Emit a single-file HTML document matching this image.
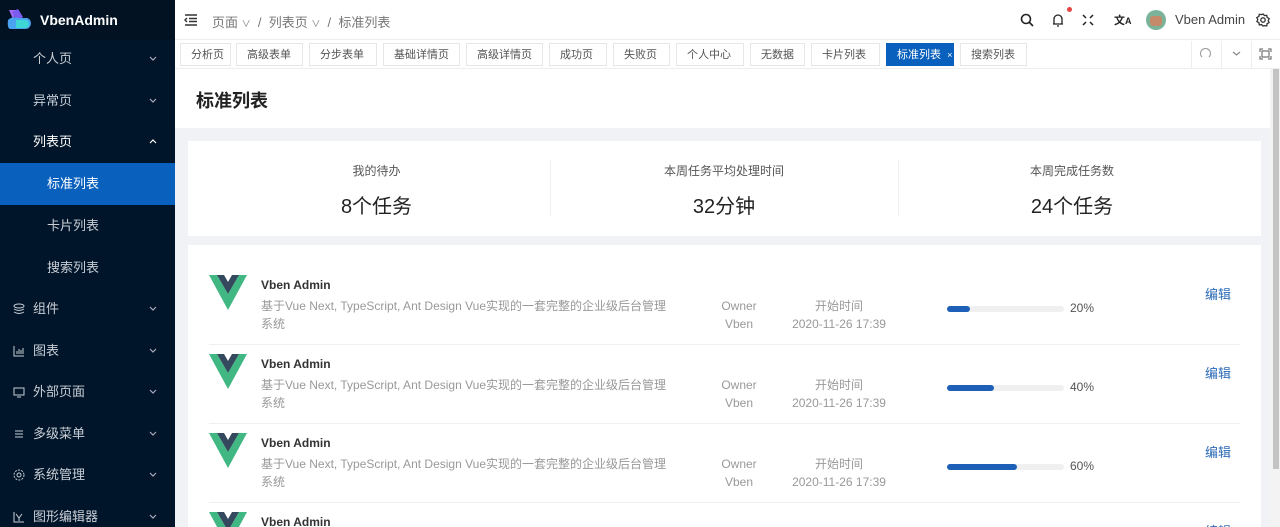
<!DOCTYPE html>
<html><head><meta charset="utf-8"><style>
*{box-sizing:border-box;margin:0;padding:0}
html{width:1280px;height:527px;overflow:hidden}
body{width:1280px;height:527px;overflow:hidden;font-family:"Liberation Sans","Noto Sans CJK SC",sans-serif;background:#f0f2f5;position:relative;font-size:13px;color:#333}
.a{position:absolute}
#side{left:0;top:0;width:175px;height:527px;background:#001529;overflow:hidden}
#logo{left:0;top:0;width:175px;height:40px;background:#021222}
.mi{position:absolute;left:0;width:175px;height:42px;line-height:42px;color:#c9ced6;font-size:13px}
.mi .t{position:absolute;left:33px}
.mi .c{position:absolute;right:18px;top:18px}
.mi svg.i{position:absolute;left:13px;top:15px}
.sel{background:#0960bd;color:#fff}
.tab{position:absolute;top:43px;height:23px;line-height:22px;border:1px solid #e6e6e6;background:#fff;font-size:11px;color:#555;padding-left:10px}
.row{position:absolute;left:209px;width:1031px;height:79px;border-bottom:1px solid #f0f0f0}
.vlogo{position:absolute;left:0;top:9px}
.tt{position:absolute;left:52px;top:12px;font-size:12px;font-weight:bold;color:#333}
.ds{position:absolute;left:52px;top:31px;width:412px;font-size:12px;color:#999;line-height:18px}
.ow{position:absolute;left:500px;top:31px;width:60px;text-align:center;font-size:12px;color:#999;line-height:18px}
.st{position:absolute;left:570px;top:31px;width:120px;text-align:center;font-size:12px;color:#999;line-height:18px}
.pb{position:absolute;left:738px;top:40px;width:117px;height:6px;border-radius:3px;background:#f0f0f0}
.pb i{display:block;height:6px;border-radius:3px;background:#1e5fb8}
.pc{position:absolute;left:861px;top:35px;font-size:12px;color:#555}
.ed{position:absolute;left:996px;top:18px;font-size:13px;color:#2c6ab5}
</style></head><body>
<div id="side" class="a">
<div id="logo" class="a">
<svg class="a" style="left:6px;top:8px" width="26" height="24" viewBox="0 0 26 24"><path d="M3 2h8l-4 9z" fill="#a56bf5"/><path d="M6 4l6-3 5 8-6 5z" fill="#7b5cf0"/><path d="M2 12q4-4 10-2h9q4 1 4 6-1 5-6 5H4q-3-1-2-9z" fill="#4aa3f0"/><path d="M10 12h10q3 1 3 5-1 3-4 3H10z" fill="#3fd6d6"/></svg>
<div class="a" style="left:40px;top:12px;color:#fff;font-weight:bold;font-size:14px">VbenAdmin</div>
</div>
<div class="mi" style="top:38px"><span class="t">个人页</span><svg class="c" width="8" height="5" viewBox="0 0 8 5" fill="none" stroke="#aab" stroke-width="1.2"><path d="M1 1l3 3 3-3"/></svg></div>
<div class="mi" style="top:80px"><span class="t">异常页</span><svg class="c" width="8" height="5" viewBox="0 0 8 5" fill="none" stroke="#aab" stroke-width="1.2"><path d="M1 1l3 3 3-3"/></svg></div>
<div class="mi" style="top:121px;color:#fff"><span class="t">列表页</span><svg class="c" width="8" height="5" viewBox="0 0 8 5" fill="none" stroke="#fff" stroke-width="1.2"><path d="M1 4l3-3 3 3"/></svg></div>
<div class="mi sel" style="top:163px"><span class="t" style="left:47px">标准列表</span></div>
<div class="mi" style="top:205px"><span class="t" style="left:47px">卡片列表</span></div>
<div class="mi" style="top:247px"><span class="t" style="left:47px">搜索列表</span></div>
<div class="mi" style="top:288px"><svg class="i" width="12" height="12" viewBox="0 0 12 12" fill="none" stroke="#c9ced6"><ellipse cx="6" cy="3" rx="5" ry="2"/><path d="M1 6q5 3 10 0M1 9q5 3 10 0"/></svg><span class="t">组件</span><svg class="c" width="8" height="5" viewBox="0 0 8 5" fill="none" stroke="#aab" stroke-width="1.2"><path d="M1 1l3 3 3-3"/></svg></div>
<div class="mi" style="top:330px"><svg class="i" width="12" height="12" viewBox="0 0 12 12" fill="none" stroke="#c9ced6"><path d="M1 1v10h10M4 9V6M6 9V4M8 9V5M10 9V3"/></svg><span class="t">图表</span><svg class="c" width="8" height="5" viewBox="0 0 8 5" fill="none" stroke="#aab" stroke-width="1.2"><path d="M1 1l3 3 3-3"/></svg></div>
<div class="mi" style="top:371px"><svg class="i" width="12" height="12" viewBox="0 0 12 12" fill="none" stroke="#c9ced6"><rect x="1" y="2" width="10" height="7"/><path d="M4 11h4"/></svg><span class="t">外部页面</span><svg class="c" width="8" height="5" viewBox="0 0 8 5" fill="none" stroke="#aab" stroke-width="1.2"><path d="M1 1l3 3 3-3"/></svg></div>
<div class="mi" style="top:413px"><svg class="i" width="12" height="12" viewBox="0 0 12 12" fill="none" stroke="#c9ced6"><path d="M2 3h8M2 6h8M2 9h8"/></svg><span class="t">多级菜单</span><svg class="c" width="8" height="5" viewBox="0 0 8 5" fill="none" stroke="#aab" stroke-width="1.2"><path d="M1 1l3 3 3-3"/></svg></div>
<div class="mi" style="top:454px"><svg class="i" width="12" height="12" viewBox="0 0 12 12" fill="none" stroke="#c9ced6"><circle cx="6" cy="6" r="2"/><circle cx="6" cy="6" r="5" stroke-dasharray="2 1.2"/></svg><span class="t">系统管理</span><svg class="c" width="8" height="5" viewBox="0 0 8 5" fill="none" stroke="#aab" stroke-width="1.2"><path d="M1 1l3 3 3-3"/></svg></div>
<div class="mi" style="top:496px"><svg class="i" width="12" height="12" viewBox="0 0 12 12" fill="none" stroke="#c9ced6"><path d="M1 1v10h10M3 3l3 4 3-4M6 7v3"/></svg><span class="t">图形编辑器</span><svg class="c" width="8" height="5" viewBox="0 0 8 5" fill="none" stroke="#aab" stroke-width="1.2"><path d="M1 1l3 3 3-3"/></svg></div>
</div>
<div class="a" style="left:175px;top:0;width:1105px;height:40px;background:#fff;border-bottom:1px solid #eee"></div>
<svg class="a" style="left:184px;top:14px" width="13" height="12" viewBox="0 0 13 12" fill="none" stroke="#333" stroke-width="1.4"><path d="M1 1h12M5 4.5h8M5 7.5h8M1 11h12M3 4l-2 2 2 2"/></svg>
<div class="a" style="left:212px;top:12px;font-size:13px;color:#777">页面 <span style="font-size:9px">∨</span> &nbsp;/ &nbsp;列表页 <span style="font-size:9px">∨</span> &nbsp;/ &nbsp;标准列表</div>
<svg class="a" style="left:1020px;top:13px" width="14" height="14" viewBox="0 0 14 14" fill="none" stroke="#222" stroke-width="1.6"><circle cx="6" cy="6" r="4.5"/><path d="M9.5 9.5l3.5 3.5"/></svg>
<svg class="a" style="left:1052px;top:13px" width="12" height="15" viewBox="0 0 12 15" fill="none" stroke="#222" stroke-width="1.3"><path d="M2 11V6a4 4 0 018 0v5zM1 11h10M5 13h2"/></svg>
<div class="a" style="left:1067px;top:7px;width:5px;height:5px;border-radius:50%;background:#e54545"></div>
<svg class="a" style="left:1082px;top:14px" width="12" height="12" viewBox="0 0 12 12" fill="none" stroke="#222" stroke-width="1.5"><path d="M1 1l3 3M11 1l-3 3M1 11l3-3M11 11l-3-3"/></svg>
<div class="a" style="left:1114px;top:12px;font-size:11px;font-weight:bold;color:#222">文<span style="font-size:9px">A</span></div>
<div class="a" style="left:1146px;top:10px;width:20px;height:20px;border-radius:50%;background:#7ab39a;overflow:hidden"><div style="margin:6px 0 0 4px;width:12px;height:10px;background:#c48a6a;border-radius:3px"></div></div>
<div class="a" style="left:1175px;top:12px;font-size:13px;color:#444">Vben Admin</div>
<svg class="a" style="left:1256px;top:13px" width="14" height="14" viewBox="0 0 14 14" fill="none" stroke="#333" stroke-width="1.3"><circle cx="7" cy="7" r="2.2"/><path d="M7 1l1.5 1.6 2.2-.3.5 2.1 2 1.2-1 2 .9 2-2 1.1-.4 2.2-2.2-.3L7 13l-1.5-1.4-2.2.3-.4-2.2-2-1.1.9-2-1-2 2-1.2.5-2.1 2.2.3z"/></svg>
<div class="a" style="left:175px;top:40px;width:1105px;height:29px;background:#fff;border-bottom:1px solid #eee"></div>
<div class="tab" style="left:180px;width:51px">分析页</div>
<div class="tab" style="left:236px;width:67px">高级表单</div>
<div class="tab" style="left:309px;width:68px">分步表单</div>
<div class="tab" style="left:383px;width:77px">基础详情页</div>
<div class="tab" style="left:466px;width:77px">高级详情页</div>
<div class="tab" style="left:549px;width:58px">成功页</div>
<div class="tab" style="left:613px;width:57px">失败页</div>
<div class="tab" style="left:676px;width:68px">个人中心</div>
<div class="tab" style="left:750px;width:55px">无数据</div>
<div class="tab" style="left:811px;width:69px">卡片列表</div>
<div class="tab" style="left:886px;width:68px;background:#0960bd;border-color:#0960bd;color:#fff">标准列表 <span style="font-size:9px;margin-left:3px">×</span></div>
<div class="tab" style="left:960px;width:67px">搜索列表</div>
<div class="a" style="left:1191px;top:41px;width:1px;height:27px;background:#eee"></div>
<div class="a" style="left:1221px;top:41px;width:1px;height:27px;background:#eee"></div>
<div class="a" style="left:1251px;top:41px;width:1px;height:27px;background:#eee"></div>
<div class="a" style="left:1200px;top:48px;width:11px;height:11px;border:1.3px solid #999;border-radius:50%;border-bottom-color:transparent"></div>
<svg class="a" style="left:1232px;top:51px" width="9" height="5" viewBox="0 0 9 5" fill="none" stroke="#888" stroke-width="1.2"><path d="M1 1l3.5 3 3.5-3"/></svg>
<svg class="a" style="left:1259px;top:48px" width="13" height="12" viewBox="0 0 13 12" fill="none" stroke="#777" stroke-width="1.2"><path d="M1 4V1h3M9 1h3v3M12 8v3H9M4 11H1V8M3 3h7v6H3z"/></svg>
<div class="a" style="left:175px;top:69px;width:1095px;height:59px;background:#fff"></div>
<div class="a" style="left:196px;top:87px;font-size:18px;font-weight:bold;color:#222">标准列表</div>
<div class="a" style="left:1270px;top:69px;width:10px;height:458px;background:#f3f3f3"></div>
<div class="a" style="left:1273px;top:69px;width:6px;height:400px;background:#c4c4c4"></div>
<div class="a" style="left:188px;top:141px;width:1073px;height:95px;background:#fff"></div>
<div class="a" style="left:550px;top:160px;width:1px;height:56px;background:#f0f0f0"></div>
<div class="a" style="left:898px;top:160px;width:1px;height:56px;background:#f0f0f0"></div>
<div class="a" style="left:188px;top:162px;width:377px;text-align:center;font-size:12px;color:#555">我的待办</div>
<div class="a" style="left:188px;top:190px;width:377px;text-align:center;font-size:20px;color:#222">8个任务</div>
<div class="a" style="left:550px;top:162px;width:348px;text-align:center;font-size:12px;color:#555">本周任务平均处理时间</div>
<div class="a" style="left:550px;top:190px;width:348px;text-align:center;font-size:20px;color:#222">32分钟</div>
<div class="a" style="left:898px;top:162px;width:348px;text-align:center;font-size:12px;color:#555">本周完成任务数</div>
<div class="a" style="left:898px;top:190px;width:348px;text-align:center;font-size:20px;color:#222">24个任务</div>
<div class="a" style="left:188px;top:245px;width:1073px;height:282px;background:#fff;overflow:hidden"></div>
<div class="row" style="top:266px">
<svg class="vlogo" width="38" height="35" viewBox="0 0 38 35"><path d="M0 0h8l11 19L30 0h8L19 35z" fill="#41b883"/><path d="M8 0h7l4 7 4-7h7L19 19z" fill="#34495e"/></svg>
<div class="tt">Vben Admin</div><div class="ds">基于Vue Next, TypeScript, Ant Design Vue实现的一套完整的企业级后台管理系统</div>
<div class="ow">Owner<br>Vben</div><div class="st">开始时间<br>2020-11-26 17:39</div>
<div class="pb"><i style="width:20%"></i></div><div class="pc">20%</div><div class="ed">编辑</div></div>
<div class="row" style="top:345px">
<svg class="vlogo" width="38" height="35" viewBox="0 0 38 35"><path d="M0 0h8l11 19L30 0h8L19 35z" fill="#41b883"/><path d="M8 0h7l4 7 4-7h7L19 19z" fill="#34495e"/></svg>
<div class="tt">Vben Admin</div><div class="ds">基于Vue Next, TypeScript, Ant Design Vue实现的一套完整的企业级后台管理系统</div>
<div class="ow">Owner<br>Vben</div><div class="st">开始时间<br>2020-11-26 17:39</div>
<div class="pb"><i style="width:40%"></i></div><div class="pc">40%</div><div class="ed">编辑</div></div>
<div class="row" style="top:424px">
<svg class="vlogo" width="38" height="35" viewBox="0 0 38 35"><path d="M0 0h8l11 19L30 0h8L19 35z" fill="#41b883"/><path d="M8 0h7l4 7 4-7h7L19 19z" fill="#34495e"/></svg>
<div class="tt">Vben Admin</div><div class="ds">基于Vue Next, TypeScript, Ant Design Vue实现的一套完整的企业级后台管理系统</div>
<div class="ow">Owner<br>Vben</div><div class="st">开始时间<br>2020-11-26 17:39</div>
<div class="pb"><i style="width:60%"></i></div><div class="pc">60%</div><div class="ed">编辑</div></div>
<div class="row" style="top:503px;height:24px;border:none;overflow:hidden">
<svg class="vlogo" width="38" height="35" viewBox="0 0 38 35"><path d="M0 0h8l11 19L30 0h8L19 35z" fill="#41b883"/><path d="M8 0h7l4 7 4-7h7L19 19z" fill="#34495e"/></svg>
<div class="tt">Vben Admin</div><div class="ed">编辑</div></div>
</body></html>
